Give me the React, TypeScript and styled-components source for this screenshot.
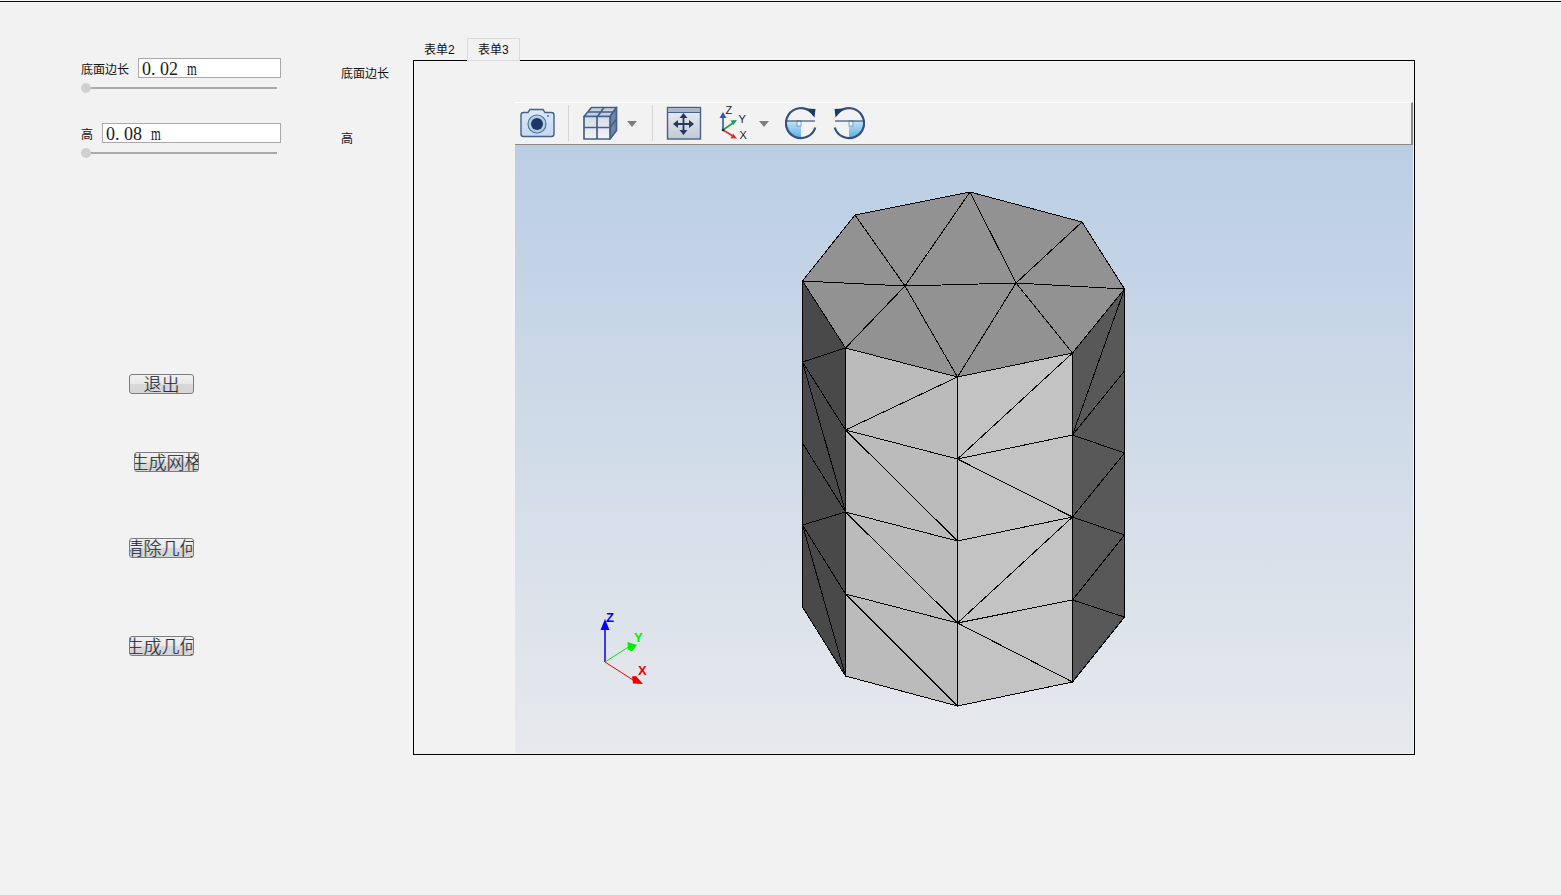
import styled, { createGlobalStyle } from "styled-components";

const GlobalStyle = createGlobalStyle`
  html, body {
    margin: 0;
    padding: 0;
    background: #f2f2f2;
  }
  body {
    font-family: "Liberation Sans", "Noto Sans CJK SC", sans-serif;
    font-size: 12px;
    color: #111;
  }
`;

const Window = styled.div`
  width: 1561px;
  height: 895px;
  overflow: hidden;
  padding-top: 1px;
  box-sizing: border-box;
`;

const TopLine = styled.div`
  height: 1px;
  background: #111;
`;

const Content = styled.div`
  display: flex;
`;

const Controls = styled.div`
  width: 260px;
  margin-left: 81px;
  padding-top: 56px;
  display: flex;
  flex-direction: column;
`;

const Field = styled.div`
  width: 200px;
  display: flex;
  flex-direction: column;
  gap: 5px;
  margin-bottom: 30px;
`;

const FieldRow = styled.div`
  display: flex;
  align-items: center;
  gap: 9px;
  height: 20px;
`;

const ValueBox = styled.div`
  flex: 1;
  min-width: 0;
  height: 20px;
  box-sizing: border-box;
  padding-left: 3px;
  border: 1px solid #a9a9a9;
  background: #fff;
  overflow: hidden;
  font-family: "Liberation Serif", serif;
  font-size: 18px;
  line-height: 21px;
  color: #1a1a1a;
  white-space: pre;
`;

const Unit = styled.span`
  display: inline-block;
  transform: scaleX(0.7);
  transform-origin: left center;
`;

const Slider = styled.div`
  position: relative;
  width: 196px;
  height: 10px;
  display: flex;
  align-items: center;

  &::before {
    content: "";
    flex: 1;
    height: 2px;
    background: #aaa;
  }
`;

const SliderHandle = styled.span`
  position: absolute;
  left: 0;
  top: 0;
  width: 10px;
  height: 10px;
  border-radius: 50%;
  background: #d0d0d0;
`;

const ActionButton = styled.button<{ $top: number; $left: number }>`
  display: flex;
  justify-content: center;
  align-items: center;
  width: 65px;
  height: 20px;
  margin: ${(p) => p.$top}px 0 0 ${(p) => p.$left}px;
  padding: 0 0 2px;
  box-sizing: border-box;
  overflow: hidden;
  border: 1px solid #7c7c7c;
  border-radius: 3px;
  background: linear-gradient(#f1f1f1 0%, #e8e8e8 50%, #d8d8d8 51%, #d6d6d6 100%);
  font-family: "Noto Sans CJK SC", sans-serif;
  font-size: 18px;
  font-weight: 300;
  line-height: 18px;
  white-space: nowrap;
  color: #26303c;
  text-shadow: 0.5px 0 rgba(40, 120, 210, 0.45), -0.5px 0 rgba(200, 110, 30, 0.45);

  span {
    flex: none;
  }
`;

const EchoLabels = styled.div`
  width: 72px;
  padding-top: 62px;
  display: flex;
  flex-direction: column;
  gap: 45px;
`;

const EchoLabel = styled.div`
  height: 20px;
  line-height: 20px;
`;

const TabArea = styled.div`
  width: 1002px;
  padding-top: 36px;
`;

const TabBar = styled.div`
  display: flex;
  height: 22px;
`;

const Tab = styled.div<{ $active?: boolean }>`
  position: relative;
  z-index: 1;
  width: ${(p) => (p.$active ? 53 : 54)}px;
  height: 23px;
  box-sizing: border-box;
  padding-left: 10px;
  line-height: 23px;
  font-size: 12px;
  border: 1px solid ${(p) => (p.$active ? "#dadada" : "transparent")};
  background: ${(p) => (p.$active ? "#f2f2f2" : "transparent")};
`;

const Panel = styled.div`
  height: 695px;
  box-sizing: border-box;
  border: 1px solid #000;
  padding: 41px 1px 1px 101px;
  display: flex;
  flex-direction: column;
`;

const Toolbar = styled.div`
  height: 43px;
  box-sizing: border-box;
  padding-bottom: 1px;
  display: flex;
  align-items: center;
  border-top: 1px solid #fff;
  border-right: 2px solid #8a8a8a;
  border-bottom: 1px solid #8a8a8a;
  background: #f2f2f2;
`;

const ToolIcon = styled.svg<{ $left: number }>`
  display: block;
  flex: none;
  margin-left: ${(p) => p.$left}px;
`;

const ToolSeparator = styled.span<{ $left: number }>`
  flex: none;
  width: 1px;
  height: 36px;
  margin-left: ${(p) => p.$left}px;
  background: #d4d4d4;
`;

const Viewport = styled.div`
  flex: 1;
  min-height: 0;
  background: linear-gradient(#bacee4, #e7e9ed);
`;

const Scene = styled.svg`
  display: block;
  width: 100%;
  height: 100%;
`;

type Pt = [number, number];

// mesh nodes, columns left to right, rows top to bottom, in page pixels
const FAR_L: Pt[] = [[802.5, 281], [802.5, 362], [802.5, 443], [802.5, 525], [802.5, 607]];
const L: Pt[] = [[845.5, 348], [845.5, 430], [845.5, 512], [845.5, 594], [845.5, 676]];
const M: Pt[] = [[957.5, 377], [957.5, 459], [957.5, 541], [957.5, 623], [957.5, 706]];
const R: Pt[] = [[1072.5, 353], [1072.5, 435], [1072.5, 517], [1072.5, 600], [1072.5, 682]];
const FAR_R: Pt[] = [[1124.5, 289], [1124.5, 371], [1124.5, 453], [1124.5, 535], [1124.5, 617]];

const B: Pt = [855, 215];
const C: Pt = [970, 192];
const D: Pt = [1082, 222];
const I: Pt = [905, 286];
const J: Pt = [1016, 283];

const topFaces: Pt[][] = [
  [FAR_L[0], B, I], [B, C, I], [C, J, I], [C, D, J], [D, FAR_R[0], J],
  [FAR_L[0], I, L[0]], [I, M[0], L[0]], [I, J, M[0]], [J, R[0], M[0]], [J, FAR_R[0], R[0]],
];

const leftSideFaces: Pt[][] = [
  [FAR_L[0], L[0], FAR_L[1]],
  [FAR_L[1], L[0], L[1]],
  [FAR_L[1], L[1], L[2]],
  [FAR_L[1], L[2], FAR_L[2]],
  [FAR_L[2], L[2], FAR_L[3]],
  [FAR_L[3], L[2], L[3]],
  [FAR_L[3], L[3], L[4]],
  [FAR_L[3], L[4], FAR_L[4]],
];

const rightSideFaces: Pt[][] = [
  [R[0], FAR_R[0], R[1]],
  [R[1], FAR_R[0], FAR_R[1]],
  [R[1], FAR_R[1], FAR_R[2]],
  [R[1], FAR_R[2], R[2]],
  [R[2], FAR_R[2], FAR_R[3]],
  [R[2], FAR_R[3], R[3]],
  [R[3], FAR_R[3], FAR_R[4]],
  [R[3], FAR_R[4], R[4]],
];

const frontLeftFaces: Pt[][] = [
  [L[0], M[0], L[1]], [L[1], M[0], M[1]],
  [L[1], M[1], M[2]], [L[1], M[2], L[2]],
  [L[2], M[2], M[3]], [L[2], M[3], L[3]],
  [L[3], M[3], M[4]], [L[3], M[4], L[4]],
];

const frontRightFaces: Pt[][] = [
  [M[0], R[0], M[1]], [M[1], R[0], R[1]],
  [M[1], R[1], R[2]], [M[1], R[2], M[2]],
  [M[2], R[2], M[3]], [M[3], R[2], R[3]],
  [M[3], R[3], R[4]], [M[3], R[4], M[4]],
];

function Faces({ faces, fill }: { faces: Pt[][]; fill: string }) {
  return (
    <g fill={fill} stroke="#000" strokeWidth={1} strokeLinejoin="round" shapeRendering="crispEdges">
      {faces.map((f, i) => (
        <polygon key={i} points={f.map((p) => p.join(",")).join(" ")} />
      ))}
    </g>
  );
}

const NAVY = "#46608a";

function CameraIcon() {
  return (
    <ToolIcon $left={5} width={36} height={36} viewBox="520 105 36 36">
      <defs>
        <linearGradient id="camBody" x1="0" y1="0" x2="0" y2="1">
          <stop offset="0" stopColor="#dce9f7" />
          <stop offset="1" stopColor="#c3d8ef" />
        </linearGradient>
      </defs>
      <path
        d="M523 112.500h5l2-3h13l2 3h6.500a2.500 2.500 0 0 1 2.500 2.500v19a2.500 2.500 0 0 1-2.500 2.500h-28a2.500 2.500 0 0 1-2.500-2.500v-19a2.500 2.500 0 0 1 2.500-2.500z"
        fill="url(#camBody)"
        stroke={NAVY}
        strokeWidth={1.4}
      />
      <circle cx={537} cy={124} r={9} fill="#b5cde6" stroke="#5a7398" strokeWidth={1.2} />
      <circle cx={537} cy={124} r={6} fill="#1d3567" />
      <circle cx={548} cy={116} r={1} fill="#5a7398" />
    </ToolIcon>
  );
}

function CubeIcon() {
  return (
    <ToolIcon $left={13} width={36} height={36} viewBox="582 105 36 36">
      <defs>
        <linearGradient id="cubeFront" x1="0" y1="0" x2="0" y2="1">
          <stop offset="0" stopColor="#d5dbe6" />
          <stop offset="1" stopColor="#f1f3f6" />
        </linearGradient>
      </defs>
      <g stroke={NAVY} strokeWidth={1.7} strokeLinejoin="round">
        <path d="M584 116.500l7.500-9h25l-6.500 9z" fill="#c6cfdd" />
        <path d="M610 116.500l6.500-9v23l-6.500 8.500z" fill="#6f84a6" />
        <rect x={584} y={116.500} width={26} height={22.500} fill="url(#cubeFront)" />
        <path d="M597 116.500v22.500M584 127.500h26M597.500 116.500l6.500-9M588 112h25M610 127.500l6.500-8.500" fill="none" />
      </g>
    </ToolIcon>
  );
}

function Caret({ left }: { left: number }) {
  return (
    <ToolIcon $left={left} width={10} height={8} viewBox="0 -2 10 8">
      <path d="M0 0h10l-5 6z" fill="#7d7d7d" />
    </ToolIcon>
  );
}

function FitIcon() {
  return (
    <ToolIcon $left={13} width={36} height={36} viewBox="666 105 36 36">
      <defs>
        <linearGradient id="fitBody" x1="0" y1="0" x2="0" y2="1">
          <stop offset="0" stopColor="#eceef2" />
          <stop offset="1" stopColor="#c2c9d6" />
        </linearGradient>
      </defs>
      <rect x={667.500} y={107.500} width={33} height={31.500} fill="url(#fitBody)" stroke={NAVY} strokeWidth={1.4} />
      <rect x={668} y={108} width={32} height={4} fill="#a9b5c9" />
      <path d="M668 112.500h32" stroke={NAVY} strokeWidth={1} />
      <path d="M683.500 117v14M677 124h13" stroke="#23395f" strokeWidth={1.8} />
      <path
        d="M683.500 113l4 5h-8zM683.500 135l4-5h-8zM673 124l5-4v8zM694 124l-5-4v8z"
        fill="#23395f"
      />
    </ToolIcon>
  );
}

function TriadIcon() {
  return (
    <ToolIcon $left={17} width={31} height={36} viewBox="719 105 31 36">
      <path d="M723 130v-14" stroke="#2a5cab" strokeWidth={1.6} />
      <path d="M723 112l-3.500 6h7z" fill="#2a5cab" />
      <path d="M723 130l10-7" stroke="#22985a" strokeWidth={1.6} />
      <path d="M737 120l-6.500.5 3 4.500z" fill="#22985a" />
      <path d="M723 130l10 6" stroke="#e02c2c" strokeWidth={1.6} />
      <path d="M737 138.500l-6.500-.2 2.700-4.500z" fill="#e02c2c" />
      <circle cx={723} cy={130} r={1.2} fill="#222" />
      <g fontFamily="'Liberation Sans', sans-serif" fontSize={11} fill="#222">
        <text x={725.500} y={113.500}>Z</text>
        <text x={738.500} y={123}>Y</text>
        <text x={739.500} y={138.500}>X</text>
      </g>
    </ToolIcon>
  );
}

function RotateIcon({ left, mirrored }: { left: number; mirrored?: boolean }) {
  const id = mirrored ? "rotFillB" : "rotFillA";
  return (
    <ToolIcon $left={left} width={32} height={36} viewBox="785 105 32 36">
      <defs>
        <linearGradient id={id} x1="0" y1="0" x2="0" y2="1">
          <stop offset="0" stopColor="#c4e3f6" />
          <stop offset="1" stopColor="#5fb0e6" />
        </linearGradient>
      </defs>
      <g transform={mirrored ? "translate(1602 0) scale(-1 1)" : undefined}>
        <path d="M801 121h-15a15 15 0 0 0 15 16.500z" fill={`url(#${id})`} />
        <rect x={797} y={121} width={4} height={5} fill="#f2f2f2" stroke="#5f93c2" strokeWidth={0.8} />
        <path d="M787 121h28" stroke="#34527c" strokeWidth={1.2} />
        <path
          d="M815.300 127.500a15 15 0 1 1-4.300-15.500"
          fill="none"
          stroke="#34527c"
          strokeWidth={2.200}
        />
        <path d="M806.500 108.500l9 .5-1 8.500z" fill="#1f3a68" />
      </g>
    </ToolIcon>
  );
}

function AxisTriad() {
  return (
    <g>
      <path d="M605 662V626" stroke="#0000ff" strokeWidth={1.5} />
      <path d="M605 619l4.500 11h-9z" fill="#0000ff" />
      <path d="M605 662l25-16" stroke="#00ee00" strokeWidth={1} />
      <path d="M637 645l-9.500-3 .5 7.500 4 2z" fill="#00ee00" />
      <path d="M605 662l28 18" stroke="#ee0000" strokeWidth={1} />
      <path d="M643 684l-10-.5-1-7 4-.5z" fill="#ee0000" />
      <g fontFamily="'Liberation Sans', sans-serif" fontSize={13} fontWeight={700}>
        <text x={606} y={622} fill="#0000ff">Z</text>
        <text x={634} y={642} fill="#00ee00">Y</text>
        <text x={638} y={675} fill="#ee0000">X</text>
      </g>
    </g>
  );
}

export default function App() {
  return (
    <Window>
      <GlobalStyle />
      <TopLine />
      <Content>
        <Controls>
          <Field>
            <FieldRow>
              底面边长
              <ValueBox>0. 02  <Unit>m</Unit></ValueBox>
            </FieldRow>
            <Slider>
              <SliderHandle />
            </Slider>
          </Field>
          <Field>
            <FieldRow>
              高
              <ValueBox>0. 08  <Unit>m</Unit></ValueBox>
            </FieldRow>
            <Slider>
              <SliderHandle />
            </Slider>
          </Field>
          <ActionButton $top={186} $left={48}><span>退出</span></ActionButton>
          <ActionButton $top={58} $left={53}><span>生成网格</span></ActionButton>
          <ActionButton $top={66} $left={48}><span>清除几何</span></ActionButton>
          <ActionButton $top={78} $left={48}><span>生成几何</span></ActionButton>
        </Controls>
        <EchoLabels>
          <EchoLabel>底面边长</EchoLabel>
          <EchoLabel>高</EchoLabel>
        </EchoLabels>
        <TabArea>
          <TabBar>
            <Tab>表单2</Tab>
            <Tab $active>表单3</Tab>
          </TabBar>
          <Panel>
            <Toolbar>
              <CameraIcon />
              <ToolSeparator $left={12} />
              <CubeIcon />
              <Caret left={9} />
              <ToolSeparator $left={15} />
              <FitIcon />
              <TriadIcon />
              <Caret left={9} />
              <RotateIcon left={16} />
              <RotateIcon left={16} mirrored />
            </Toolbar>
            <Viewport>
              <Scene viewBox="515 145 898 608">
                <Faces faces={leftSideFaces} fill="#494949" />
                <Faces faces={rightSideFaces} fill="#585858" />
                <Faces faces={topFaces} fill="#929292" />
                <Faces faces={frontLeftFaces} fill="#bbbbbb" />
                <Faces faces={frontRightFaces} fill="#c3c3c3" />
                <AxisTriad />
              </Scene>
            </Viewport>
          </Panel>
        </TabArea>
      </Content>
    </Window>
  );
}
